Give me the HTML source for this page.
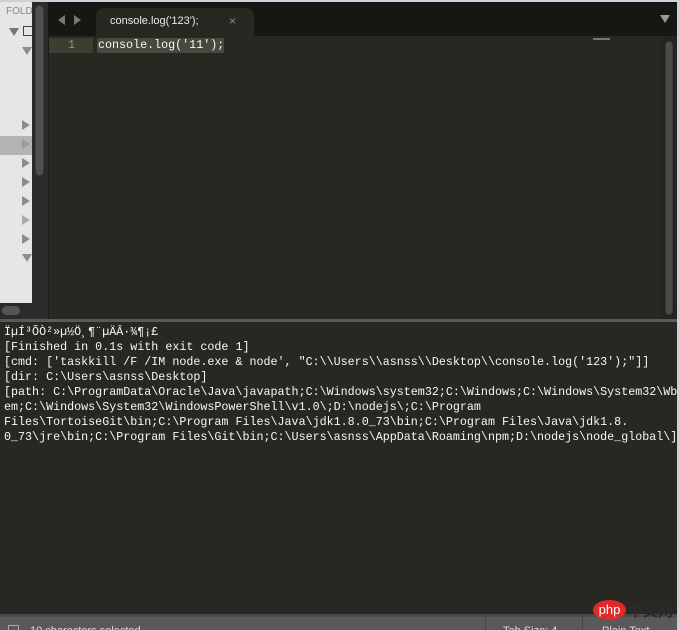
<!DOCTYPE html>
<html><head><style>
*{margin:0;padding:0;box-sizing:border-box}
html,body{width:680px;height:630px;overflow:hidden}
body{background:#272822;position:relative;font-family:"Liberation Mono",monospace}
div{position:absolute}
.mono{font-family:"Liberation Mono",monospace;font-size:11.7px;color:#f8f8f2;white-space:pre}
.tri{width:0;height:0;border-top:5px solid transparent;border-bottom:5px solid transparent;border-left:8px solid #8c8c8c}
.trd{width:0;height:0;border-left:5px solid transparent;border-right:5px solid transparent;border-top:8px solid #8c8c8c}
</style></head><body>
<div style="left:0;top:0;width:680px;height:2px;background:#c9d3de"></div>
<div style="left:0;top:2px;width:680px;height:34px;background:#161613"></div>
<div style="left:0;top:2px;width:33px;height:301px;background:#e6e6e6"></div>
<div style="left:0;top:303px;width:48px;height:16px;background:#2b2b2b"></div>
<div style="left:2px;top:306px;width:18px;height:9px;border-radius:5px;background:#555"></div>
<div style="left:6px;top:6px;font-family:'Liberation Sans',sans-serif;font-size:10px;color:#888">FOLD</div>
<div class="trd" style="left:9px;top:28px;border-top-color:#777"></div>
<div style="left:23px;top:26px;width:10px;height:10px;border:1.5px solid #444"></div>
<div class="trd" style="left:22px;top:47px"></div>
<div style="left:0;top:136px;width:33px;height:19px;background:#b4b4b4"></div>
<div class="tri" style="left:22px;top:120px"></div>
<div class="tri" style="left:22px;top:139px;border-left-color:#9a9a9a"></div>
<div class="tri" style="left:22px;top:158px"></div>
<div class="tri" style="left:22px;top:177px"></div>
<div class="tri" style="left:22px;top:196px"></div>
<div class="tri" style="left:22px;top:215px;border-left-color:#aaa"></div>
<div class="tri" style="left:22px;top:234px"></div>
<div class="trd" style="left:22px;top:254px"></div>
<div style="left:32px;top:2px;width:16px;height:301px;background:#2b2b2b"></div>
<div style="left:35px;top:5px;width:9px;height:171px;border-radius:5px;background:#505050;border:1px solid #3a3a3a"></div>
<div style="left:48px;top:2px;width:1px;height:317px;background:#1a1a1a"></div>
<div style="left:58px;top:15px;width:0;height:0;border-top:5px solid transparent;border-bottom:5px solid transparent;border-right:7px solid #777"></div>
<div style="left:74px;top:15px;width:0;height:0;border-top:5px solid transparent;border-bottom:5px solid transparent;border-left:7px solid #777"></div>
<div style="left:96px;top:8px;width:158px;height:28px;background:#272822;border-radius:8px 8px 0 0"></div>
<div style="left:110px;top:15px;font-family:'Liberation Sans',sans-serif;font-size:11px;color:#e8e8e8">console.log('123');</div>
<div style="left:229px;top:14px;font-family:'Liberation Sans',sans-serif;font-size:12px;color:#888">×</div>
<div class="trd" style="left:660px;top:15px;border-top-color:#999"></div>
<div style="left:49px;top:36px;width:628px;height:283px;background:#272822"></div>
<div style="left:49px;top:38px;width:44px;height:15px;background:#3e3d32"></div>
<div class="mono" style="left:68px;top:38px;color:#90908a;line-height:15px">1</div>
<div style="left:97px;top:38px;width:127px;height:15px;background:#49483e;border-radius:2px"></div>
<div class="mono" style="left:98px;top:38px;line-height:15px">console.log('11');</div>
<div style="left:593px;top:38px;width:17px;height:2px;background:#777"></div>
<div style="left:661px;top:37px;width:16px;height:282px;background:#232320"></div>
<div style="left:665px;top:41px;width:8px;height:274px;border-radius:4px;background:#4a4a4a;border:1px solid #3a3a3a"></div>
<div style="left:677px;top:2px;width:3px;height:628px;background:#c9d3de"></div>
<div style="left:0;top:319px;width:677px;height:3px;background:#5a5a5a"></div>
<div class="mono" style="left:4px;top:325px;line-height:15px">ÏµÍ³ÕÒ²»µ½Ö¸¶¨µÄÂ·¾¶¡£
[Finished in 0.1s with exit code 1]
[cmd: ['taskkill /F /IM node.exe &amp; node', "C:\\Users\\asnss\\Desktop\\console.log('123');"]]
[dir: C:\Users\asnss\Desktop]
[path: C:\ProgramData\Oracle\Java\javapath;C:\Windows\system32;C:\Windows;C:\Windows\System32\Wb
em;C:\Windows\System32\WindowsPowerShell\v1.0\;D:\nodejs\;C:\Program
Files\TortoiseGit\bin;C:\Program Files\Java\jdk1.8.0_73\bin;C:\Program Files\Java\jdk1.8.
0_73\jre\bin;C:\Program Files\Git\bin;C:\Users\asnss\AppData\Roaming\npm;D:\nodejs\node_global\]</div>
<div style="left:0;top:614px;width:677px;height:3px;background:#4a4a4a"></div>
<div style="left:0;top:617px;width:677px;height:13px;background:#595959"></div>
<div style="left:8px;top:625px;width:11px;height:11px;border:1px solid #aaa"></div>
<div style="left:30px;top:625px;font-family:'Liberation Sans',sans-serif;font-size:11px;color:#ddd">10 characters selected</div>
<div style="left:485px;top:617px;width:1px;height:13px;background:#444"></div>
<div style="left:503px;top:625px;font-family:'Liberation Sans',sans-serif;font-size:11px;color:#ddd">Tab Size: 4</div>
<div style="left:582px;top:617px;width:1px;height:13px;background:#444"></div>
<div style="left:602px;top:625px;font-family:'Liberation Sans',sans-serif;font-size:11px;color:#ddd">Plain Text</div>
<div style="left:593px;top:600px;width:33px;height:20px;border-radius:50%;background:#e02a2a;color:#fff;font-family:'Liberation Sans',sans-serif;font-size:13px;text-align:center;line-height:19px">php</div>
<div style="left:628px;top:600px;font-family:'Liberation Sans','Noto Sans CJK SC',sans-serif;font-size:15px;color:#2a2a2a;font-weight:bold">中文网</div>
</body></html>
